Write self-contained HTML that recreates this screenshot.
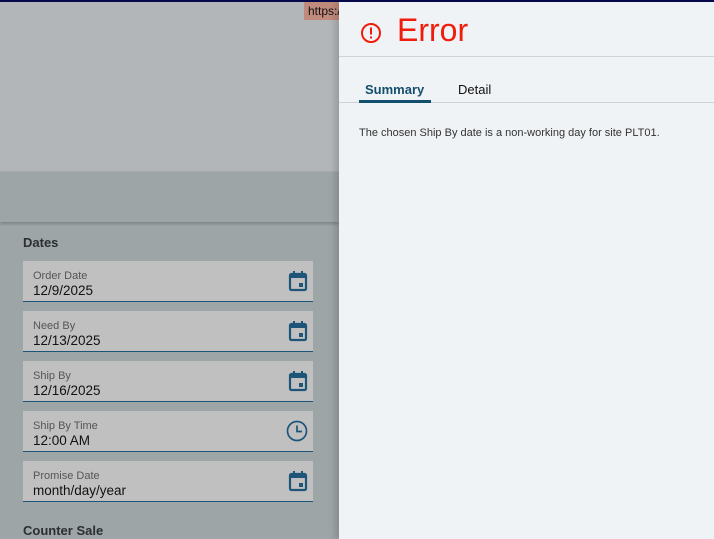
<!DOCTYPE html>
<html><head><meta charset="utf-8"><style>
*{margin:0;padding:0;box-sizing:border-box}
body{width:714px;height:539px;overflow:hidden;position:relative;font-family:"Liberation Sans",sans-serif;background:#9ea5a7}
.top{position:absolute;left:0;top:0;width:714px;height:2px;background:#06084a;z-index:5}
.hdr{position:absolute;left:0;top:2px;width:339px;height:169px;background:#b3b6b8}
.band{position:absolute;left:0;top:171px;width:339px;height:51px;background:#9ea5a7;border-top:1px solid #a6abad;box-shadow:0 2px 3px rgba(0,0,0,.2)}
.url{position:absolute;left:304px;top:2px;width:35px;height:18px;background:#c08a7c;font-size:12px;line-height:18px;padding-left:4px;color:#111;overflow:hidden;white-space:nowrap}
h3{position:absolute;left:23px;font-size:13px;font-weight:bold;color:#2b2f31}
.f{position:absolute;left:23px;width:290px;height:41px;background:#c0c0c0;border-bottom:1.5px solid #1d5578}
.f .l{position:absolute;left:10px;top:9px;font-size:11px;color:#555}
.f .v{position:absolute;left:10px;top:22px;font-size:13.5px;color:#111}
.f svg{position:absolute;left:265px;top:9px}
.panel{position:absolute;left:339px;top:2px;width:375px;height:537px;background:#f0f3f6;box-shadow:-4px 0 6px rgba(0,0,0,.15)}
.title{position:absolute;left:58px;top:10px;font-size:32px;color:#f01c0c}
.hr{position:absolute;left:0;top:54px;width:375px;height:1px;background:#cfd3d6}
.tabs{position:absolute;left:0;top:100px;width:375px;height:1px;background:#cfd3d6}
.tab{position:absolute;top:80px;font-size:13px}
.ul{position:absolute;left:20px;top:98px;width:72px;height:3px;background:#124e6e}
.msg{position:absolute;left:20px;top:125px;font-size:11px;color:#333}
</style></head><body>
<div class="top"></div>
<div class="hdr"></div>
<div class="band"></div>
<div class="url">https:/</div>
<h3 style="top:235px">Dates</h3>
<h3 style="top:523px">Counter Sale</h3>

<div class="f" style="top:261px"><div class="l">Order Date</div><div class="v">12/9/2025</div><svg width="20" height="22" viewBox="0 0 20 22"><rect x="2" y="4" width="16" height="16" rx="1.5" fill="none" stroke="#1d5578" stroke-width="2.2"/><rect x="2" y="4" width="16" height="4" fill="#1d5578"/><rect x="5" y="1" width="2" height="4" fill="#1d5578"/><rect x="13" y="1" width="2" height="4" fill="#1d5578"/><rect x="11" y="13" width="4" height="4" fill="#1d5578"/></svg></div>
<div class="f" style="top:311px"><div class="l">Need By</div><div class="v">12/13/2025</div><svg width="20" height="22" viewBox="0 0 20 22"><rect x="2" y="4" width="16" height="16" rx="1.5" fill="none" stroke="#1d5578" stroke-width="2.2"/><rect x="2" y="4" width="16" height="4" fill="#1d5578"/><rect x="5" y="1" width="2" height="4" fill="#1d5578"/><rect x="13" y="1" width="2" height="4" fill="#1d5578"/><rect x="11" y="13" width="4" height="4" fill="#1d5578"/></svg></div>
<div class="f" style="top:361px"><div class="l">Ship By</div><div class="v">12/16/2025</div><svg width="20" height="22" viewBox="0 0 20 22"><rect x="2" y="4" width="16" height="16" rx="1.5" fill="none" stroke="#1d5578" stroke-width="2.2"/><rect x="2" y="4" width="16" height="4" fill="#1d5578"/><rect x="5" y="1" width="2" height="4" fill="#1d5578"/><rect x="13" y="1" width="2" height="4" fill="#1d5578"/><rect x="11" y="13" width="4" height="4" fill="#1d5578"/></svg></div>
<div class="f" style="top:411px"><div class="l">Ship By Time</div><div class="v">12:00 AM</div><svg width="22" height="22" viewBox="0 0 22 22" style="left:263px;top:9px"><circle cx="11" cy="11" r="9.5" fill="none" stroke="#1d5578" stroke-width="1.7"/><path d="M11 5.5V11.5H16" fill="none" stroke="#1d5578" stroke-width="1.7"/></svg></div>
<div class="f" style="top:461px"><div class="l">Promise Date</div><div class="v">month/day/year</div><svg width="20" height="22" viewBox="0 0 20 22"><rect x="2" y="4" width="16" height="16" rx="1.5" fill="none" stroke="#1d5578" stroke-width="2.2"/><rect x="2" y="4" width="16" height="4" fill="#1d5578"/><rect x="5" y="1" width="2" height="4" fill="#1d5578"/><rect x="13" y="1" width="2" height="4" fill="#1d5578"/><rect x="11" y="13" width="4" height="4" fill="#1d5578"/></svg></div>

<div class="panel">
<svg style="position:absolute;left:21px;top:20px" width="22" height="22" viewBox="0 0 22 22"><circle cx="11" cy="11" r="9" fill="none" stroke="#f01c0c" stroke-width="2"/><rect x="10" y="5.5" width="2" height="7" fill="#f01c0c"/><rect x="10" y="14.5" width="2" height="2" fill="#f01c0c"/></svg>
<div class="title">Error</div>
<div class="hr"></div>
<div class="tab" style="left:26px;color:#124e6e;font-weight:bold">Summary</div>
<div class="tab" style="left:119px;color:#111">Detail</div>
<div class="tabs"></div>
<div class="ul"></div>
<div class="msg">The chosen Ship By date is a non-working day for site PLT01.</div>
</div>
</body></html>
